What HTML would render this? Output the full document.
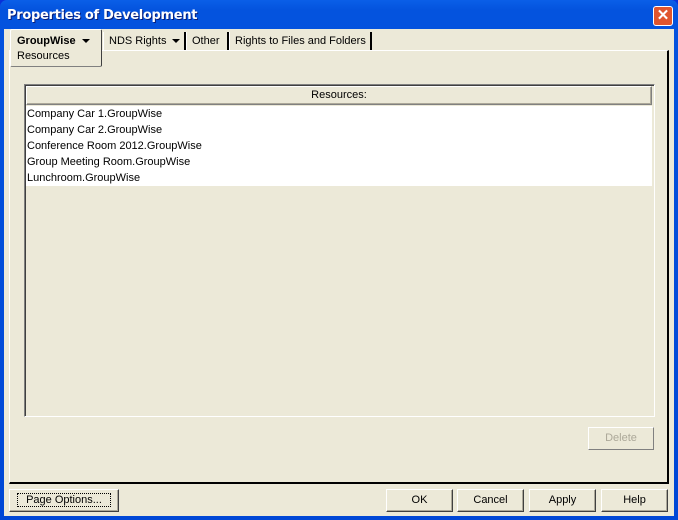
<!DOCTYPE html><html><head><style>
*{margin:0;padding:0;box-sizing:border-box}
body{width:678px;height:520px;overflow:hidden;font-family:"Liberation Sans",sans-serif;font-size:11px;background:#0831d9}
.win{position:absolute;left:0;top:0;width:678px;height:520px;background:linear-gradient(#0a5fe8,#0453de 10px,#0047d6);border-radius:7px 7px 0 0}
.title{position:absolute;left:7px;top:8px;color:#fff;font-weight:bold;font-size:13px;text-shadow:1px 1px #0a1e78;font-family:"DejaVu Sans",sans-serif;letter-spacing:-0.3px}
.close{position:absolute;left:653px;top:6px;width:20px;height:20px;background:#e0552e;border:1px solid #fff;border-radius:3px;color:#fff;font-weight:bold;text-align:center;line-height:17px;font-size:15px}
.client{position:absolute;left:4px;top:29px;width:670px;height:487px;background:#ece9d8}
.abs{position:absolute}
.tab{position:absolute;top:3px;height:18px;border-left:1px solid #fff;border-right:2px solid #000;padding:3px 5px 0;background:#ece9d8;white-space:nowrap}
.panel{position:absolute;left:5px;top:21px;width:660px;height:434px;border-left:1px solid #fff;border-top:1px solid #fff;border-right:2px solid #000;border-bottom:2px solid #000}
.btn{position:absolute;top:460px;height:23px;border:1px solid;border-color:#fff #404040 #404040 #fff;box-shadow:inset -1px -1px #aca899;text-align:center;line-height:21px;background:#ece9d8}
.arr{display:inline-block;width:0;height:0;border-left:4px solid transparent;border-right:4px solid transparent;border-top:4px solid #000;vertical-align:middle;margin-left:6px}
</style></head><body>
<div class="win">
<div class="title">Properties of Development</div>
<div class="close">✕</div>
<div class="client">
<div class="panel"></div>
<div class="abs" style="left:6px;top:0;width:92px;height:38px;background:#ece9d8;border:1px solid #fff;border-right:1px solid #404040;border-bottom:1px solid #808080;border-radius:2px;z-index:2"></div>
<div class="abs" style="left:13px;top:6px;font-weight:bold;z-index:3">GroupWise<span class="arr"></span></div>
<div class="abs" style="left:13px;top:21px;z-index:3">Resources</div>
<div class="tab" style="left:99px;width:83px">NDS Rights<span class="arr"></span></div>
<div class="tab" style="left:182px;width:43px">Other</div>
<div class="tab" style="left:225px;width:143px">Rights to Files and Folders</div>
<div class="abs" style="left:20px;top:55px;width:631px;height:333px;border:1px solid;border-color:#808080 #fff #fff #808080;box-shadow:inset 1px 1px #404040"></div>
<div class="abs" style="left:22px;top:57px;width:626px;height:19px;border:1px solid;border-color:#fff #808080 #808080 #fff;box-shadow:inset -1px -1px #aca899;text-align:center;line-height:17px">Resources:</div>
<div class="abs" style="left:22px;top:77px;width:626px;height:80px;background:#fff;padding-left:1px;line-height:16px">Company Car 1.GroupWise<br>Company Car 2.GroupWise<br>Conference Room 2012.GroupWise<br>Group Meeting Room.GroupWise<br>Lunchroom.GroupWise</div>
<div class="abs" style="left:584px;top:398px;width:66px;height:23px;border:1px solid;border-color:#fff #808080 #808080 #fff;color:#aca899;text-align:center;line-height:21px">Delete</div>
<div class="btn" style="left:5px;width:110px"><span style="border:1px dotted #000;padding:0 8px">Page Options...</span></div>
<div class="btn" style="left:382px;width:67px">OK</div>
<div class="btn" style="left:453px;width:67px">Cancel</div>
<div class="btn" style="left:525px;width:67px">Apply</div>
<div class="btn" style="left:597px;width:67px">Help</div>
</div></div>
</body></html>
